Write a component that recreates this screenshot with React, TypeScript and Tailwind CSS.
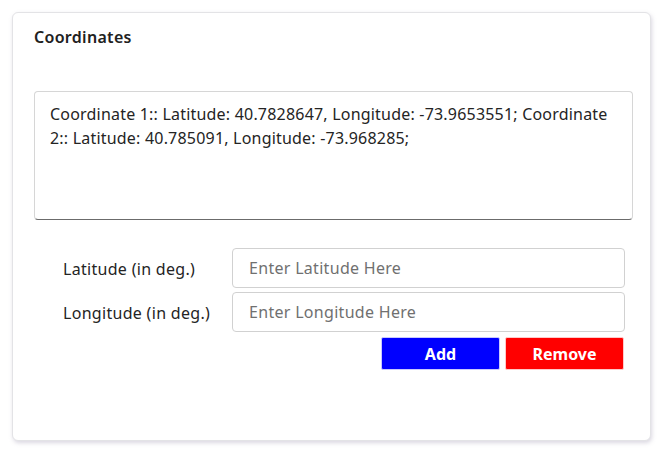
import React, { useState } from "react";

const font = { fontFamily: '"Segoe UI", "Noto Sans", "Open Sans", sans-serif' };

export default function App() {
  const [lat, setLat] = useState("");
  const [lng, setLng] = useState("");

  return (
    <div className="w-[671px] h-[454px] bg-white pt-3 pl-3 tracking-[0.3px]" style={font}>
      <div className="w-[639px] h-[429px] bg-white border border-[#e3e3e6] rounded-md shadow-[1px_2px_4px_rgba(150,140,170,0.35)] pl-[21px] pr-[17px] pt-[15px]">
        <h2 className="text-[16px] font-semibold text-[#212121] leading-[18px]">Coordinates</h2>

        <div className="mt-[45px] h-[129px] border border-[#d6d6d6] border-b-[#6b6b6b] rounded-[4px] px-[15px] pt-[10px] text-[16px] leading-[24px] text-[#242424] tracking-[0.2px]">
          Coordinate 1:: Latitude: 40.7828647, Longitude: -73.9653551; Coordinate 2:: Latitude: 40.785091,
          Longitude: -73.968285;
        </div>

        <div className="mt-[28px] flex flex-col gap-1 pl-[29px] pr-[8px]">
          <div className="flex items-center">
            <label className="w-[169px] text-[16px] text-[#242424] pt-[1px]">Latitude (in deg.)</label>
            <input
              value={lat}
              onChange={(e) => setLat(e.target.value)}
              placeholder="Enter Latitude Here"
              className="flex-1 h-10 border border-[#d1d1d1] rounded-[4px] px-4 text-[16px] placeholder:text-[#707070] outline-none"
            />
          </div>
          <div className="flex items-center">
            <label className="w-[169px] text-[16px] text-[#242424] pt-[1px]">Longitude (in deg.)</label>
            <input
              value={lng}
              onChange={(e) => setLng(e.target.value)}
              placeholder="Enter Longitude Here"
              className="flex-1 h-10 border border-[#d1d1d1] rounded-[4px] px-4 text-[16px] placeholder:text-[#707070] outline-none"
            />
          </div>
          <div className="flex justify-end gap-[5px] mt-[1px] pr-[1px]">
            <button className="w-[119px] h-[33px] bg-[#0000ff] text-white font-bold text-[16px] tracking-normal rounded-[2px] border border-[#c9c9ff] pt-[1px]">
              Add
            </button>
            <button className="w-[119px] h-[33px] bg-[#ff0000] text-white font-bold text-[16px] tracking-normal rounded-[2px] border border-[#ffc9c9] pt-[1px]">
              Remove
            </button>
          </div>
        </div>
      </div>
    </div>
  );
}
